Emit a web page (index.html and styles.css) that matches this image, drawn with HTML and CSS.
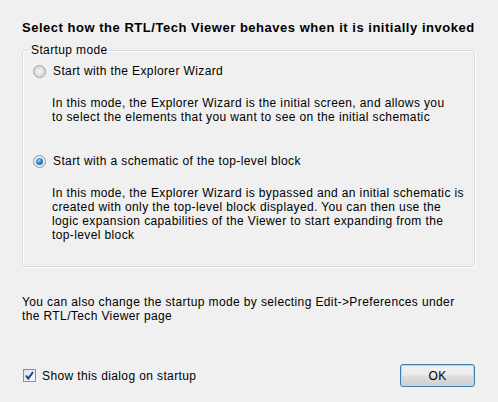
FILE: index.html
```html
<!DOCTYPE html>
<html>
<head>
<meta charset="utf-8">
<link rel="stylesheet" href="styles.css">
</head>
<body>
<div class="dialog">
  <h1 class="title">Select how the RTL/Tech Viewer behaves when it is initially invoked</h1>
  <fieldset class="group">
    <legend class="legend">Startup mode</legend>
    <label class="option">
      <input type="radio" name="mode" class="radio">
      <span>Start with the Explorer Wizard</span>
    </label>
    <p class="desc">In this mode, the Explorer Wizard is the initial screen, and allows you<br>to select the elements that you want to see on the initial schematic</p>
    <label class="option option-second">
      <input type="radio" name="mode" class="radio" checked>
      <span>Start with a schematic of the top-level block</span>
    </label>
    <p class="desc">In this mode, the Explorer Wizard is bypassed and an initial schematic is<br>created with only the top-level block displayed. You can then use the<br>logic expansion capabilities of the Viewer to start expanding from the<br>top-level block</p>
  </fieldset>
  <p class="note">You can also change the startup mode by selecting Edit-&gt;Preferences under<br>the RTL/Tech Viewer page</p>
  <div class="footer">
    <label class="check">
      <span class="checkbox"><svg width="11" height="11" viewBox="0 0 11 11"><path d="M2 5.5 L4.3 8.5 L9 2" fill="none" stroke="#1d3c8f" stroke-width="2"/></svg></span>
      <span>Show this dialog on startup</span>
    </label>
    <button class="ok">OK</button>
  </div>
</div>
</body>
</html>
```

FILE: styles.css
```css
html, body {
  margin: 0;
  padding: 0;
  background: #f0f0f0;
}
.dialog {
  width: 498px;
  height: 402px;
  box-sizing: border-box;
  padding: 20px 23px 0 22px;
  font-family: "Liberation Sans", Arial, sans-serif;
  font-size: 12px;
  line-height: 14px;
  letter-spacing: 0.38px;
  color: #000;
  display: flex;
  flex-direction: column;
}
.title {
  margin: 0;
  font-size: 13px;
  line-height: 16px;
  font-weight: bold;
  letter-spacing: 0.52px;
  white-space: nowrap;
}
.group {
  margin: 7px 0 0 0;
  padding: 7px 10px 24px 10px;
  border: 1px solid #d5dfe5;
  border-radius: 3px;
  box-shadow: 1px 1px 0 #fff, inset 1px 1px 0 #fff;
  min-width: 0;
}
.legend {
  padding: 0 2px;
  margin-left: -4px;
  line-height: 14px;
}
.option {
  display: flex;
  align-items: center;
  gap: 7px;
  height: 14px;
}
.option-second {
  margin-top: 30px;
}
.radio {
  appearance: none;
  -webkit-appearance: none;
  margin: 0;
  width: 13px;
  height: 13px;
  border-radius: 50%;
  border: 1px solid #a3a3a3;
  box-sizing: border-box;
  background: radial-gradient(circle at 50% 50%, #f6f6f6 0, #e2e2e2 45%, #c9c9c9 100%);
  position: relative;
}
.radio:checked {
  border-color: #8c9aa4;
  background: radial-gradient(circle at 50% 50%, #ffffff 0, #eaeaea 60%, #d0d0d0 100%);
}
.radio:checked::after {
  content: "";
  position: absolute;
  left: 2px;
  top: 2px;
  width: 7px;
  height: 7px;
  border-radius: 50%;
  background: radial-gradient(circle at 40% 35%, #8fd0f7 0, #2b86d0 45%, #124f8c 100%);
}
.desc {
  margin: 18px 0 0 19px;
  white-space: nowrap;
}
.note {
  margin: 28px 0 0 0;
  white-space: nowrap;
}
.footer {
  margin-top: 41px;
  display: flex;
  align-items: center;
  justify-content: space-between;
}
.check {
  display: flex;
  align-items: center;
  gap: 6px;
  margin-left: 1px;
}
.checkbox {
  width: 13px;
  height: 13px;
  box-sizing: border-box;
  border: 1px solid #8f8f8f;
  background: linear-gradient(135deg, #dfe4ea, #f8f9fa);
  display: flex;
  align-items: center;
  justify-content: center;
}
.checkbox svg {
  display: block;
}
.ok {
  width: 75px;
  height: 23px;
  margin: 0;
  padding: 0;
  border: 1px solid #3c7fb1;
  border-radius: 3px;
  background: linear-gradient(#f2f2f2 0%, #ebebeb 48%, #dddddd 52%, #cfcfcf 100%);
  box-shadow: inset 0 0 0 1px #a9dcf5;
  font-family: "Liberation Sans", Arial, sans-serif;
  font-size: 12px;
  letter-spacing: 0.38px;
  color: #000;
}
```
